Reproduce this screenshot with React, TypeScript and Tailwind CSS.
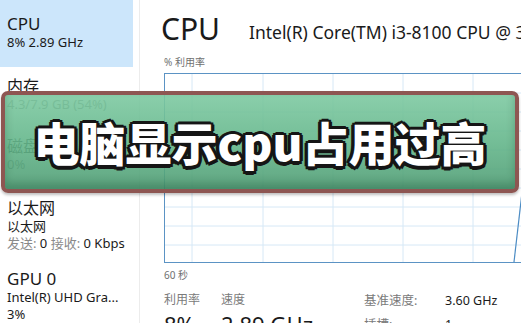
export default function App() {
  const vx = [27, 98, 168, 238, 308];
  const hy = [19, 38, 57, 76, 95, 114, 133, 152, 171];
  return (
    <div
      className="relative w-[521px] h-[323px] overflow-hidden bg-white text-[#1a1a1a]"
      style={{ fontFamily: '"Noto Sans", "Noto Sans CJK SC", sans-serif' }}
    >
      <div className="flex h-full">
        {/* sidebar */}
        <aside className="w-[140px] shrink-0 h-full border-r border-[#ececec]">
          <div className="w-[133px] h-[67px] bg-[#cce6fb] pl-[7px] pt-[14px]">
            <div className="text-[17px] leading-[20px]">CPU</div>
            <div className="text-[13px] leading-[17px]">8% 2.89 GHz</div>
          </div>
          <div className="pl-[7px] pt-[9px]">
            <div className="text-[16px] leading-[20px]">内存</div>
            <div className="text-[13px] leading-[17px] text-[#6b6b6b]">4.3/7.9 GB (54%)</div>
          </div>
          <div className="pl-[7px] mt-[23px]">
            <div className="text-[16px] leading-[20px]">磁盘 0 (C: D:)</div>
            <div className="text-[13px] leading-[17px] text-[#6b6b6b]">0%</div>
          </div>
          <div className="pl-[7px] mt-[25px]">
            <div className="text-[16px] leading-[20px]">以太网</div>
            <div className="text-[13px] leading-[17px]">以太网</div>
            <div className="text-[13px] leading-[17px]">
              <span className="text-[#8a8a8a]">发送:</span> 0 <span className="text-[#8a8a8a]">接收:</span> 0 Kbps
            </div>
          </div>
          <div className="pl-[7px] mt-[17px]">
            <div className="text-[17px] leading-[20px]">GPU 0</div>
            <div className="text-[13px] leading-[17px] whitespace-nowrap">Intel(R) UHD Gra...</div>
            <div className="text-[13px] leading-[17px]">3%</div>
          </div>
        </aside>

        {/* main */}
        <main className="flex-1 pl-[24px] min-w-0">
          <div className="flex items-start pt-[11px] whitespace-nowrap">
            <div className="w-[88px] shrink-0 -ml-[3px] text-[30px] leading-[36px]">CPU</div>
            <div className="mt-[10px] text-[17.5px] leading-[22px]">Intel(R) Core(TM) i3-8100 CPU @ 3.60GHz</div>
          </div>
          <div className="mt-[8px] text-[10px] leading-[14px] text-[#707070]">% 利用率</div>
          <div className="mt-[4px] w-[380px] h-[190px] border border-[#5b93c4] relative">
            <svg width="378" height="188" className="block">
              {vx.map((x) => (
                <line key={"v" + x} x1={x} y1={0} x2={x} y2={188} stroke="#d6e8f6" strokeWidth="1" />
              ))}
              {hy.map((y) => (
                <line key={"h" + y} x1={0} y1={y} x2={378} y2={y} stroke="#d6e8f6" strokeWidth="1" />
              ))}
              <polyline points="349,188 358,110" fill="none" stroke="#4c8cc4" strokeWidth="1.2" />
            </svg>
          </div>
          <div className="mt-[5px] text-[10px] leading-[14px] text-[#707070]">60 秒</div>
          <div className="mt-[10px] flex whitespace-nowrap">
            <div className="w-[57px] shrink-0">
              <div className="text-[12px] leading-[16px] text-[#7a7a7a]">利用率</div>
              <div className="mt-[3px] text-[22px] leading-[26px]">8%</div>
            </div>
            <div className="w-[143px] shrink-0">
              <div className="text-[12px] leading-[16px] text-[#7a7a7a]">速度</div>
              <div className="mt-[3px] text-[22px] leading-[26px]">2.89 GHz</div>
            </div>
            <div className="grid grid-cols-[81px_auto] text-[12.5px] leading-[21px] -mt-[2px]">
              <div className="text-[#7a7a7a]">基准速度:</div>
              <div>3.60 GHz</div>
              <div className="text-[#7a7a7a]">插槽:</div>
              <div>1</div>
            </div>
          </div>
        </main>
      </div>

      {/* banner overlay */}
      <div className="absolute left-[1px] top-[91px] w-[518px] h-[102px] rounded-[7px] border-[4px] border-[#8e5652] bg-gradient-to-b from-[#7dc9a1]/90 via-[#64b68b]/90 to-[#4f9d74]/90 shadow-[inset_0_-6px_8px_rgba(0,60,30,0.25),0_2px_3px_rgba(0,0,0,0.25)] flex items-center justify-center">
        <div
          className="text-white font-black text-[46px] leading-none whitespace-nowrap -mt-[2px] [text-shadow:3.5px_0_0_#151515,-3.5px_0_0_#151515,0_3.5px_0_#151515,0_-3.5px_0_#151515,2.5px_2.5px_0_#151515,-2.5px_2.5px_0_#151515,2.5px_-2.5px_0_#151515,-2.5px_-2.5px_0_#151515]"
          style={{ fontFamily: '"Noto Sans CJK SC", sans-serif' }}
        >
          电脑显示cpu占用过高
        </div>
      </div>
    </div>
  );
}
